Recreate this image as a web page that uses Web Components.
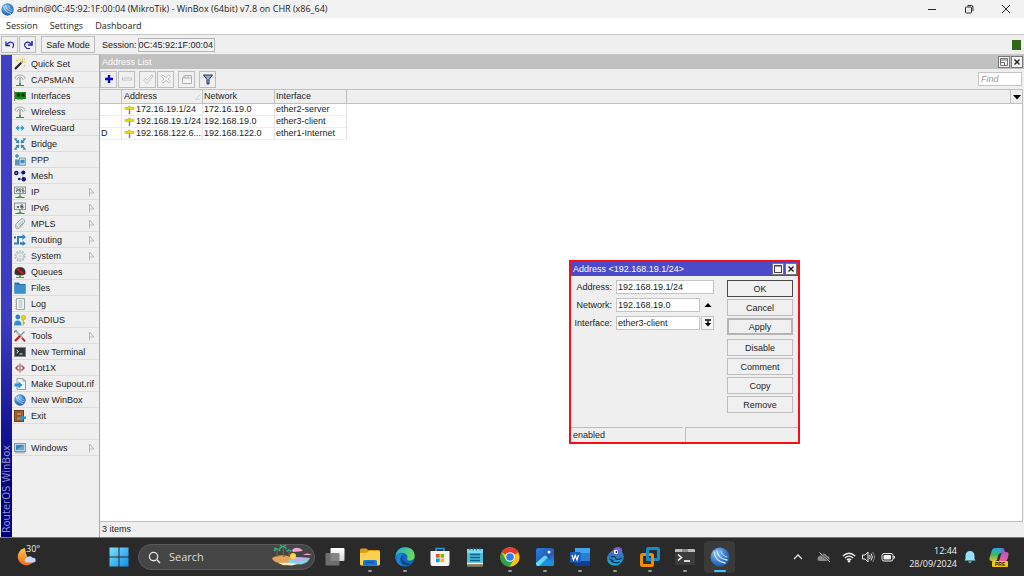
<!DOCTYPE html>
<html lang="en">
<head>
<meta charset="utf-8">
<title>WinBox</title>
<style>
  html, body { margin: 0; height: 100%; }
  body { background: #efefef; overflow: hidden; font: 9px/12px "Liberation Sans", Arial, sans-serif; color: #1c1c1c; }
</style>
</head>
<body>
<desktop-shell></desktop-shell>
<script>
/* ---------- icons: [viewBox size, markup] ---------- */
const T = 'fill="none" stroke="#2a2a2a"';
const stand = '<path d="M6 8v3" stroke="#555"/><path d="M1.500 11.500h9" stroke="#3a7d2a"/><rect x="4.500" y="10" width="3" height="2" fill="#2fb52f"/>';
const antenna = '<g fill="none" stroke="#9ab0a8"><path d="M1 5Q1 1 6 1t5 4"/><path d="M3 6Q3 3 6 3t3 3"/></g><path d="M6 4v6" stroke="#777"/><path d="M2 11.500h8" stroke="#3c8a3c"/><rect x="5" y="9" width="2" height="2" fill="#3bae3b"/>';
const ball = '<defs><radialGradient id="b" cx=".35" cy=".3" r=".8"><stop offset="0" stop-color="#8cc3f2"/><stop offset=".6" stop-color="#3477c9"/><stop offset="1" stop-color="#1f4f9c"/></radialGradient></defs><circle cx="10" cy="10" r="9.500" fill="url(#b)"/><g fill="none" stroke="#d2e6fb" stroke-width="1.300" stroke-linecap="round"><path d="M4 5Q5 14 15 16"/><path d="M7 4Q8 11.500 17 13"/><path d="M11 4Q12 9 17 10" stroke-width=".8"/></g>';
const ICONS = {
  winbox: [20, ball],
  minimize: [12, `<path d="M2 6.500h8" ${T}/>`],
  restore: [12, `<rect x="2.500" y="4" width="6" height="6" rx="1" ${T}/><path d="M4.500 2.500h4q1.500 0 1.500 1.500v4" ${T}/>`],
  close: [12, `<path d="M2 2l8 8M10 2l-8 8" ${T}/>`],
  undo: [12, '<path d="M2 2.500v4h4" fill="none" stroke="#2525b5" stroke-width="1.300"/><path d="M2.500 6Q5 2 8 3.500T8.500 9" fill="none" stroke="#2525b5" stroke-width="1.200"/>'],
  redo: [12, '<path d="M10 2v4H6" fill="none" stroke="#2525b5" stroke-width="1.600"/><path d="M9.500 5.500Q6 1.500 3.500 4T5 9.500h3" fill="none" stroke="#2525b5" stroke-width="1.200"/>'],
  plus: [12, '<path d="M6 2v8M2 6h8" stroke="#0a0ac0" stroke-width="2.400"/>'],
  minus: [12, '<rect x="1.500" y="5" width="9" height="2" fill="#fafafa" stroke="#b5b5b5" stroke-width=".8"/>'],
  check: [12, '<path d="M1.500 7l2-1.500L5 7.500 9.500 2l1.500 1L5 10.500z" fill="#f6f6f6" stroke="#b5b5b5" stroke-width=".8"/>'],
  cross: [12, '<path d="M3 2l3 2.500L9 2l1.500 1.500L8 6l2.500 2.500L9 10 6 7.500 3 10 1.500 8.500 4 6 1.500 3.500z" fill="#f6f6f6" stroke="#b5b5b5" stroke-width=".8"/>'],
  note: [12, '<path d="M1.500 4.500l2-2h7v8h-9zM1.500 5h9M4 3v2M7 3v2" fill="#f4f4f4" stroke="#b0b0b0"/>'],
  filter: [12, '<path d="M1.500 2h9L7 6.500v4.500H5V6.500z" fill="#93a9dc" stroke="#2b2f55"/>'],
  sort: [8, '<path d="M1 7h6M1 7L6.500 1" fill="none" stroke="#c4c4c4"/>'],
  addr: [12, '<path d="M6 2v9" stroke="#777" stroke-width="1.600"/><path d="M6 5v6" stroke="#4ea84e"/><path d="M1 3.500h3.500L6 2l1.500 1.500H11v2.500H1z" fill="#e6d800" stroke="#b9ae10" stroke-width=".5"/>'],
  down: [8, '<path d="M0 2h8L4 6.500z" fill="#000"/>'],
  up: [8, '<path d="M.5 6h7L4 2z" fill="#000"/>'],
  dropbar: [8, '<path d="M1 1h6M4 2v2" stroke="#000" stroke-width="1.400"/><path d="M.8 4h6.400L4 7.500z" fill="#000"/>'],
  tear: [10, '<path d="M3.500 9.500V1l4.500 5H4" fill="#fafafa" stroke="#b4b4b4"/>'],
  wmax: [10, '<path d="M1.500 1.500h7v7h-7z" fill="none" stroke="#444"/><path d="M1 2h8" stroke="#444"/>'],
  wrest: [10, '<path d="M1.500 1.500h7v7h-7zM1.500 3h7M1.500 5.500h4v3" fill="none" stroke="#666" stroke-width=".9"/>'],
  wx: [10, '<path d="M2.500 2.500l5 5M7.500 2.500l-5 5" stroke="#222" stroke-width="1.400"/>'],
  wand: [12, '<path d="M1 11L7.500 4.500" stroke="#222" stroke-width="2.200"/><path d="M7 5l2-2" stroke="#aaa" stroke-width="2"/><path d="M8.500.5v2M11.500 4H10M2 2l2 1M6 .8l.5 1.500M10 7l1 1.500M11 1l-1 1" stroke="#e4cf10" stroke-width="1.200"/>'],
  antenna: [12, antenna],
  nic: [12, '<path d="M.5 1v10" stroke="#888"/><rect x="1" y="2" width="11" height="7" fill="#178a17"/><path d="M3 3.500h3v3H3zM7.500 3.500h3v3h-3z" fill="#0a2c0a"/><path d="M3 9.500h6" stroke="#c9b400"/>'],
  wg: [12, '<path d="M1.500 6l3-3v2h3V3l3 3-3 3V7h-3v2z" fill="#2a9be0"/><path d="M5 6h2" stroke="#eaf6ff"/>'],
  bridge: [12, '<path d="M1 1l4 4M11 1L7 5M1 11l4-4M11 11L7 7" stroke="#2c7fbd" stroke-width="1.500"/><path d="M5 1.500V5H1.500zM7 1.500V5h3.500zM5 10.500V7H1.500zM7 10.500V7h3.500z" fill="#3a80ad"/><path d="M0 0h3v1.500H0zM9 0h3v1.500H9zM0 10.500h3V12H0zM9 10.500h3V12H9z" fill="#7ba3bd"/>'],
  ppp: [12, '<path d="M3 0v4M1 2h4" stroke="#2d8cc9" stroke-width="1.300"/><rect x="1" y="5.500" width="4" height="6" fill="#5f93b5"/><rect x="5.500" y="4" width="6" height="7.500" fill="#b9d0df" stroke="#6d8ea3" stroke-width=".7"/><rect x="6.500" y="6" width="4" height="3" fill="#3c90c8"/>'],
  mesh: [12, '<path d="M2.500 3h6l.5 6" fill="none" stroke="#a4a9cc" stroke-width=".8"/><g fill="#14147e"><circle cx="2.300" cy="3" r="2.200"/><circle cx="9.300" cy="2.600" r="2"/><circle cx="9.700" cy="9.300" r="2.200"/><circle cx="5.300" cy="9" r="1.300"/></g><circle cx="2.300" cy="3" r=".8" fill="#bcc"/>'],
  ip: [12, '<rect x=".5" y="1" width="11" height="6.500" fill="#e3e9e9" stroke="#8a9797"/><path d="M2 3h2v1.500H2.500V6M5 6h1.500V4.500H5V3h2M8 6h2V4.500H8V3h2" fill="none" stroke="#555" stroke-width=".8"/>' + stand],
  ipv6: [12, '<rect x=".5" y="1" width="11" height="6.500" fill="#e3e9e9" stroke="#8a9797"/><path d="M3 4l1 2 1-2M9 3H7v3h2V4.500H7" fill="none" stroke="#444" stroke-width=".9"/>' + stand],
  mpls: [12, '<path d="M2 6L7 1q2-.8 3 .5t.5 3L5 10.500q-1.500.8-3-.5T2 6z" fill="#edf3f1" stroke="#91a8a0"/><path d="M4 7.500l4-4q1.500 0 1 1.500L5 9M1.500 7.500q2 .5 3 3" fill="none" stroke="#9fb4ad"/>'],
  routing: [12, '<path d="M0 9.500h4V3h5" fill="none" stroke="#2a7fc4" stroke-width="2"/><path d="M0 3.500h2M6 9.500h3" fill="none" stroke="#33658a" stroke-width="1.800"/><path d="M8.500 0L12 3 8.500 6zM8.500 6.800L12 9.500 8.500 12z" fill="#2a86cc"/>'],
  gear: [12, '<circle cx="6" cy="6" r="4.800" fill="none" stroke="#b4c0bd" stroke-width="1.800" stroke-dasharray="1.800 1.200"/><circle cx="6" cy="6" r="3.400" fill="#f3f5f5" stroke="#b4c0bd"/><circle cx="6" cy="6" r="1.200" fill="#fff" stroke="#aab8b4" stroke-width=".7"/>'],
  queues: [12, '<path d="M.5 8Q0 1 6 1t5.500 7q-2 1.500-5.500 1.500T.5 8z" fill="#3a3232"/><path d="M3 2.500L9.500 8" stroke="#c8201c" stroke-width="2"/><path d="M2 11.500h8" stroke="#39a339"/><rect x="5" y="9.500" width="2" height="2" fill="#3bbb3b"/>'],
  files: [12, '<path d="M.5.500H5l1 1.500h5.500v9.500H.5z" fill="#2a72ad"/><path d="M.5 3h11v8.500H.5z" fill="#3c8fcd"/>'],
  log: [12, '<path d="M2.500.5h8v11h-8z" fill="#f3f6f5" stroke="#97a7a2"/><path d="M4.500 3h4M4.500 5h4M4.500 7h4M4.500 9h4" stroke="#a9b6b2"/><path d="M1.500 2v9" stroke="#b9c5c1" stroke-dasharray="1 1"/>'],
  radius: [12, '<circle cx="3.800" cy="3" r="2.400" fill="#2b84c8"/><path d="M0 11.500q0-5 3.800-5t3.700 5z" fill="#2f8fd6"/><circle cx="9.300" cy="3.500" r="2.300" fill="#e3d21c" stroke="#a99a12" stroke-width=".5"/><path d="M9.300 5.500v6M9.300 9h1.700" stroke="#c9b814" stroke-width="1.300"/>'],
  tools: [12, '<path d="M2 1l9 10" stroke="#aeb4b6" stroke-width="2"/><path d="M10.500 1.500L6 6" stroke="#8a9194" stroke-width="1.300"/><path d="M6 6l-5 5" stroke="#c3202a" stroke-width="2.400"/><path d="M0 2.500L2.500 0" stroke="#888" stroke-width="1.500"/><path d="M8 8l3 3.500" stroke="#b3222a" stroke-width="1.600"/>'],
  term: [12, '<rect x=".5" y="1.500" width="11" height="9" fill="#2e3336" stroke="#81888b"/><path d="M2.500 4l2 1.500-2 1.500M5.500 8h3" fill="none" stroke="#e8e8e8"/>'],
  dot1x: [12, '<path d="M4.500 3.500L2 6l2.500 2.500M7.500 3.500L10 6 7.500 8.500" fill="none" stroke="#c23a44" stroke-width="1.400"/><path d="M6 1.500v9" stroke="#555"/>'],
  supout: [12, '<path d="M3 .5h6l2.500 2.500v8.500H3z" fill="#eef2f3" stroke="#8fa0a6"/><path d="M9 .5V3h2.500" fill="none" stroke="#8fa0a6"/><path d="M.5 5.500h4v-2L8.500 7l-4 3.500v-2h-4z" fill="#2b93d4"/>'],
  exit: [12, '<rect x=".5" y=".5" width="9" height="11" fill="#a9622c" stroke="#6e3c18"/><path d="M2.500 2.500h5v3h-5zM2.500 7h5v3h-5z" fill="#c88850" stroke="#7a4520" stroke-width=".6"/><path d="M12 6.500v2.500H9v2L5 7.800 9 4.500v2z" fill="#2a93d8"/>'],
  screen: [12, '<rect x=".5" y="1.500" width="11" height="8" fill="#bcd3e0" stroke="#8296a2"/><rect x="2" y="3" width="8" height="5" fill="#2f86c4"/><path d="M2 8l8-5v5z" fill="#5aa9dd"/><path d="M1 10.800h10" stroke="#8aa0ab"/>'],
  weather: [20, '<defs><linearGradient id="m" x2="0" y2="1"><stop stop-color="#ffc64a"/><stop offset="1" stop-color="#ee6a1c"/></linearGradient></defs><path d="M8 1A8.700 8.700 0 1 0 17.500 13Q9 14 8 1z" fill="url(#m)"/><path d="M9 15.500a2.500 2.500 0 0 1 .8-4.700 3.500 3.500 0 0 1 6 .2 2.300 2.300 0 0 1 1.200 4.500z" fill="#c4d8fb"/>'],
  start: [20, '<defs><linearGradient id="s" x2="1" y2="1"><stop stop-color="#7fe1ff"/><stop offset="1" stop-color="#0b8de8"/></linearGradient></defs><path d="M.5.5h9v9h-9zM10.500.5h9v9h-9zM.5 10.500h9v9h-9zM10.500 10.500h9v9h-9z" fill="url(#s)"/>'],
  search: [14, '<circle cx="6" cy="6" r="4.500" fill="none" stroke="#e6e6e6" stroke-width="1.400"/><path d="M9.500 9.500l3.500 3.500" stroke="#e6e6e6" stroke-width="1.500"/>'],
  task: [20, '<defs><linearGradient id="t" x2="0" y2="1"><stop stop-color="#fff"/><stop offset="1" stop-color="#d6d6d6"/></linearGradient></defs><rect x="5.500" y="1" width="14" height="13" rx="1" fill="url(#t)"/><rect x=".5" y="6" width="14" height="12.500" rx="1" fill="#777" opacity=".88"/>'],
  explorer: [20, '<path d="M0 3q0-1.500 1.500-1.500h5L8 3h10.500Q20 3 20 4.500V10H0z" fill="#e09a16"/><path d="M0 6l7-.2L9 4h9.500Q20 4 20 5.500V17q0 1.500-1.500 1.500h-17Q0 18.500 0 17z" fill="#ffd04d"/><path d="M3 18.500V15q0-2 2-2h10q2 0 2 2v3.500z" fill="#1577d2"/><path d="M6.500 15.500h7" stroke="#0b4f9e" stroke-width="1.200"/>'],
  edge: [20, '<defs><linearGradient id="e" x2="1" y2=".4"><stop stop-color="#21a7e8"/><stop offset="1" stop-color="#66dd55"/></linearGradient></defs><circle cx="10" cy="10" r="9.700" fill="#0f66bd"/><path d="M.3 9Q2 .3 10 .3q9 0 9.700 8.200.3 4.500-4.500 5-3.500 0-3-2 .8-2-.2-3.500Q6 2.800.3 9z" fill="url(#e)"/><path d="M8 7.500q-4 3-1.500 7.500 3.500 5 10.500 1.500-5 1-8-2t-1-7z" fill="#0a3c7a"/><path d="M.3 10Q2 4.500 8.500 7 3 11 6 16.500L8 19.500Q1 17.500.3 10z" fill="#1b82d4"/>'],
  store: [20, '<path d="M6 5V1.500h8V5" fill="none" stroke="#1e9fe0" stroke-width="1.500"/><path d="M.5 4h19v13q0 2-2 2h-15q-2 0-2-2z" fill="#f5f5f5"/><path d="M6 7h3.700v3.700H6z" fill="#f25022"/><path d="M10.500 7h3.700v3.700h-3.700z" fill="#7fba00"/><path d="M6 11.500h3.700v3.700H6z" fill="#00a4ef"/><path d="M10.500 11.500h3.700v3.700h-3.700z" fill="#ffb900"/>'],
  notepad: [20, '<rect x="2" y="2" width="16" height="17.500" rx="1" fill="#4fbcdb"/><rect x="2" y="2" width="16" height="4" fill="#7fdcf2"/><path d="M5 7.500h10M5 10.500h10M5 13.500h10" stroke="#0b6488" stroke-width="1.300"/><path d="M2 16.500h16" stroke="#e9f6f9" stroke-width="1.500"/><path d="M2 18.300h16" stroke="#c36a22" stroke-width="2"/><path d="M5 .5v3M8.300.5v3M11.600.5v3M15 .5v3" stroke="#1d6d87"/>'],
  chrome: [20, '<circle cx="10" cy="10" r="9.700" fill="#fbc116"/><path d="M10 10L1.600 5.150A9.700 9.700 0 0 1 18.400 5.150z" fill="#e33b2e"/><path d="M1.600 5.150A9.700 9.700 0 0 0 9.500 19.700L14 12.500 10 10 5.800 12.400z" fill="#2da04c"/><circle cx="10" cy="10" r="4.800" fill="#fff"/><circle cx="10" cy="10" r="3.800" fill="#2f7de9"/>'],
  photos: [20, '<defs><linearGradient id="p" x2="1" y2="1"><stop stop-color="#1f83dc"/><stop offset=".6" stop-color="#3155b5"/><stop offset="1" stop-color="#20a5e8"/></linearGradient></defs><rect x="1" y="1" width="18" height="18" rx="2" fill="url(#p)"/><path d="M1 16l8-7q1-1 2 0l8 8q0 2-2 2H3q-2 0-2-3z" fill="#1b8fe0"/><path d="M1 16L9 9q1-1 2 0l1.500 1.500L4 19H3q-2 0-2-3z" fill="#64dcf8"/><circle cx="14" cy="5" r="1.500" fill="#fff"/>'],
  word: [20, '<rect x="5" y="1" width="15" height="18" rx="1" fill="#2b7cd3"/><path d="M5 1h15v5H5z" fill="#41a5ee"/><path d="M5 14h15v5H5z" fill="#103f91"/><rect x="0" y="5" width="10.500" height="10.500" rx="1" fill="#185abd"/><path d="M2 8l1.500 5L5.200 8.500 7 13l1.500-5" fill="none" stroke="#fff" stroke-width="1.200"/>'],
  gns: [20, '<defs><linearGradient id="g" x2="0" y2="1"><stop stop-color="#8a5ae0"/><stop offset=".5" stop-color="#2a7bbd"/><stop offset="1" stop-color="#19b5d8"/></linearGradient></defs><path d="M8 3q1-3 6-3 4 1 3 5 3 4 1 8-3 6-9 5.500Q2 18 2 11 3 6 8 3z" fill="url(#g)"/><path d="M6 10q4-2 5 2 3 1 6-1M6 14q4 3 9 1M4.500 12l4 2" fill="none" stroke="#0c2b52" stroke-width="1.200"/><circle cx="11" cy="5" r="2.200" fill="#fff"/><circle cx="11.500" cy="5" r=".9" fill="#222"/>'],
  vmware: [20, '<rect x="7.500" y="1.500" width="11" height="11" rx="1" fill="none" stroke="#0f8fc9" stroke-width="3"/><rect x="1.500" y="7.500" width="11" height="11" rx="1" fill="none" stroke="#f38b00" stroke-width="3"/><path d="M7.500 6v6.500h4" fill="none" stroke="#0f8fc9" stroke-width="3"/>'],
  terminal: [20, '<rect x="0" y="2" width="20" height="16" rx="1" fill="#3c3c3c"/><path d="M0 5V3q0-1 1-1h18q1 0 1 1v2z" fill="#bdbdbd"/><path d="M7 2h6v3H7z" fill="#8a8a8a"/><path d="M3 7.500l3.500 3L3 13.500" fill="none" stroke="#fff" stroke-width="1.600"/><path d="M9 14h6" stroke="#fff" stroke-width="1.600"/>'],
  chev: [12, '<path d="M2 8l4-4 4 4" fill="none" stroke="#e8e8e8" stroke-width="1.300"/>'],
  cloud: [14, '<path d="M3 11a2.500 2.500 0 0 1 0-5 3.700 3.700 0 0 1 7 0 2.600 2.600 0 0 1 1 5z" fill="#8c8c8c"/><path d="M2 2l11 10" stroke="#2b2b2b" stroke-width="2"/><path d="M2.500 2.500L13 12" stroke="#c8c8c8"/>'],
  wifi: [14, '<g fill="none" stroke="#eee" stroke-width="1.200"><path d="M.8 6q6-5.500 12.400 0"/><path d="M2.800 8q4.200-3.800 8.400 0"/><path d="M4.800 10q2.200-2 4.400 0"/></g><circle cx="7" cy="11.300" r="1.200" fill="#eee"/>'],
  sound: [14, '<path d="M1.500 5h2.500l3-3v10l-3-3H1.500z" fill="none" stroke="#eee"/><path d="M8.500 5q1.500 2 0 4M10 3.500q2.800 3.500 0 7" fill="none" stroke="#eee"/><path d="M11.500 2q4 5 0 10" fill="none" stroke="#888"/>'],
  battery: [14, '<rect x="1" y="3.500" width="11" height="7.500" rx="2" fill="none" stroke="#eee"/><rect x="2.500" y="5" width="7.500" height="4.500" rx="1" fill="#eee"/><path d="M13.200 6v2.500" stroke="#eee" stroke-width="1.400"/>'],
  bell: [14, '<path d="M1.500 10.500l1-1.500V5.500a4.500 4.500 0 0 1 9 0V9l1 1.500z" fill="#93e2fb"/><path d="M5 11.500h4q-2 2.500-4 0z" fill="#93e2fb"/>'],
  copilot: [20, '<defs><linearGradient id="c1" x2="0" y2="1"><stop stop-color="#2aa4ea"/><stop offset=".5" stop-color="#35b86a"/><stop offset="1" stop-color="#f2c01c"/></linearGradient><linearGradient id="c2" x2="0" y2="1"><stop stop-color="#8c52e0"/><stop offset="1" stop-color="#f0608a"/></linearGradient></defs><path d="M6 1h7q2 0 1.500 2L12 6q-2 0-3 3l-1 4q-.5 1-2 1H3q-3 0-2.500-3L3 3q1-2 3-2z" fill="url(#c1)"/><path d="M12 1q3-.5 3.500 2l.5 2h1.500q2.500 0 2 3l-1 4q-.5 2-2.500 2H10L12.500 6z" fill="url(#c2)"/>'],
  beach: [40, '<path d="M1 22q8-4 20-2l17 1q-2 5-9 6.500L13 26z" fill="#7fd4e8"/><path d="M0 21q6-4 16-2 5 1 4 3-5 1-3 4-2 3-6 2l-4-2Q1 25 0 21z" fill="#e0a45a"/><path d="M6 26q12-1 20 1l-6 1.500-9-.5z" fill="#f6efc8"/><path d="M22 20l16 1-7 3-9 1z" fill="#b9b1f0"/><circle cx="21" cy="19" r="3" fill="#ffd34d"/><path d="M20 13q3-3 6-2 3 0 5 3l-10 1zM31 18q4-3 9 0z" fill="#f0a8d2"/><path d="M5 20V13M12 20l-1-9M17 20v-6" stroke="#8a5a34" stroke-width="1.200"/><path d="M2 14q3-4 6 0M7.500 12q3.500-5 7 0M14.500 14.500q2.500-3 5 0M5 12l-3-1M11 10l3-2M11 10L8 8" fill="none" stroke="#2fae7c" stroke-width="1.500"/>']
};

const define = (name, css, html, setup) => {
  const tpl = document.createElement('template');
  tpl.innerHTML = `<style>*{box-sizing:border-box}button,input{font:inherit;color:inherit;margin:0}button{cursor:default}${css}</style>${html}`;
  customElements.define(name, class extends HTMLElement {
    constructor() {
      super();
      this.attachShadow({ mode: 'open' }).append(tpl.content.cloneNode(true));
    }
    connectedCallback() { if (setup) setup(this, this.shadowRoot); }
  });
};

define('ui-icon', ':host{display:inline-flex;flex:none;width:var(--size,12px);height:var(--size,12px)}div{width:100%;height:100%}svg{display:block;width:100%;height:100%}', '<div></div>', (el, root) => {
  const icon = ICONS[el.getAttribute('name')];
  if (!icon) return;
  const size = el.getAttribute('size');
  if (size) el.style.setProperty('--size', size + 'px');
  root.querySelector('div').innerHTML = `<svg viewBox="0 0 ${icon[0]} ${icon[0]}" aria-hidden="true">${icon[1]}</svg>`;
});

/* Flat button with a grey outline; icon or text comes through the slot */
define('ui-button', `
  :host{display:flex;height:17px;min-width:17px}
  button{flex:1;display:flex;align-items:center;justify-content:center;padding:0;border:1px solid #bdbdbd;background:#f0f0f0;border-radius:0}
  :host([kind=default]) button{border-color:#4a4a4a}
  :host([kind=focus]) button{border:2px solid #b4b4b4}
  :host([kind=frame]){height:12px;min-width:12px}
  :host([kind=frame]) button{border-color:#777;background:#f4f4f4}
`, '<button type="button"><slot></slot></button>', (el, root) => {
  const l = el.getAttribute('label');
  if (l) root.querySelector('button').setAttribute('aria-label', l);
});

define('app-titlebar', `
  :host{display:flex;align-items:center;height:18px;background:#f2f2f2;padding-left:1px;font:9px/14px "Open Sans","Noto Sans",sans-serif}
  .t{flex:1;padding-left:3px}
  button{width:37px;height:18px;border:0;background:none;display:flex;align-items:center;justify-content:center;padding:0}
`, `<ui-icon name="winbox" size="13"></ui-icon><span class="t"><slot></slot></span>
  <button aria-label="Minimize"><ui-icon name="minimize"></ui-icon></button>
  <button aria-label="Restore"><ui-icon name="restore"></ui-icon></button>
  <button aria-label="Close"><ui-icon name="close"></ui-icon></button>`);

define('app-menubar', `
  :host{display:flex;gap:12px;height:16px;background:#fff;padding-left:6px;font:9px/16px "Open Sans","Noto Sans",sans-serif}
  button{border:0;background:none;padding:0}
`, '<button>Session</button><button>Settings</button><button>Dashboard</button>');

define('app-toolbar', `
  :host{display:flex;align-items:center;height:21px;background:#efefef;border:solid #c6c6c6;border-width:1px 0;padding:0 3px 0 1px;gap:1px}
  .safe{width:54px;margin-left:4px}
  label{padding-left:6px}
  input{width:77px;height:14px;border:1px solid #b5b5b5;background:#f2f2f2;padding:0}
  .led{margin-left:auto;width:9px;height:10px;background:#316618}
`, `<ui-button label="Undo"><ui-icon name="undo"></ui-icon></ui-button>
  <ui-button label="Redo"><ui-icon name="redo"></ui-icon></ui-button>
  <ui-button class="safe">Safe Mode</ui-button>
  <label for="s">Session:</label><input id="s" readonly value="0C:45:92:1F:00:04">
  <span class="led"></span>`);

define('side-item', `
  :host{display:block}
  button{display:flex;align-items:center;width:100%;height:16px;border:0;border-bottom:1px solid #dcdcdc;background:none;padding:0 3px 0 2px;text-align:left}
  span{flex:1;padding-left:5px;white-space:nowrap}
`, '<button type="button"><span><slot></slot></span></button>', (el, root) => {
  const b = root.querySelector('button');
  b.insertAdjacentHTML('afterbegin', `<ui-icon name="${el.getAttribute('icon')}"></ui-icon>`);
  if (el.hasAttribute('sub')) b.insertAdjacentHTML('beforeend', '<ui-icon name="tear" size="10"></ui-icon>');
});

define('side-menu', `
  :host{display:flex;width:100px;border-right:1px solid #a8a8a8;background:#efefef}
  .strip{width:11px;margin-left:1px;flex:none;display:flex;align-items:center;justify-content:flex-start;writing-mode:vertical-rl;transform:rotate(180deg);background:linear-gradient(to top,#4040c8 0,#3c3cc0 55%,#00007c 90%);color:#9090c8;font:10px/11px "DejaVu Sans",sans-serif;padding-top:4px}
  nav{flex:1;min-width:0;padding-top:1px}
  .gap{height:16px;border-bottom:1px solid #dcdcdc}
`, `<div class="strip">RouterOS WinBox</div><nav></nav>`, (el, root) => {
  const items = [['wand','Quick Set'],['antenna','CAPsMAN'],['nic','Interfaces'],['antenna','Wireless'],['wg','WireGuard'],['bridge','Bridge'],['ppp','PPP'],['mesh','Mesh'],['ip','IP',1],['ipv6','IPv6',1],['mpls','MPLS',1],['routing','Routing',1],['gear','System',1],['queues','Queues'],['files','Files'],['log','Log'],['radius','RADIUS'],['tools','Tools',1],['term','New Terminal'],['dot1x','Dot1X'],['supout','Make Supout.rif'],['winbox','New WinBox'],['exit','Exit'],null,['screen','Windows',1]];
  root.querySelector('nav').innerHTML = items.map(i => i ? `<side-item icon="${i[0]}"${i[2] ? ' sub' : ''}>${i[1]}</side-item>` : '<div class="gap"></div>').join('');
});

define('address-list', `
  :host{display:flex;flex-direction:column;flex:1;min-width:0;background:#efefef}
  header{display:flex;align-items:center;gap:1px;height:14px;background:#c0c0c0;color:#fff;padding:0 1px 0 2px}
  header span{flex:1}
  .tools{display:flex;align-items:center;height:20px;padding:0 2px 0 0;gap:1px}
  .g{margin-left:3px}
  input{margin-left:auto;width:44px;height:14px;border:1px solid #c4c4c4;background:#fff;padding:0 2px;font-style:italic}
  input::placeholder{color:#999;opacity:1}
  .list{flex:1;background:#fff;border:solid #c0c0c0;border-width:1px 1px 1px 0;margin-right:1px;position:relative}
  .head{height:14px;background:#efefef;border-bottom:1px solid #c0c0c0;display:flex;justify-content:flex-end}
  .head button{width:12px;border:0;border-left:1px solid #c0c0c0;background:none;padding:0;display:flex;align-items:center;justify-content:center}
  table{border-collapse:separate;border-spacing:0;table-layout:fixed;width:247px;margin-top:-14px}
  th,td{padding:0 0 0 2px;height:12px;line-height:11px;font-weight:400;text-align:left;white-space:nowrap;border-right:1px solid #e4e4e4;border-bottom:1px solid #ececec}
  th{height:14px;line-height:13px;border-color:#c0c0c0}
  th,td{padding-left:1px}
  .c{display:flex;align-items:center;gap:1px;padding-left:1px}
  th .c{justify-content:space-between;padding-right:1px}
  footer{height:15px;line-height:15px;padding-left:2px}
`, `<header><span>Address List</span>
    <ui-button kind="frame" label="Restore"><ui-icon name="wrest" size="10"></ui-icon></ui-button>
    <ui-button kind="frame" label="Close"><ui-icon name="wx" size="10"></ui-icon></ui-button></header>
  <div class="tools">
    <ui-button label="Add"><ui-icon name="plus"></ui-icon></ui-button>
    <ui-button label="Remove"><ui-icon name="minus"></ui-icon></ui-button>
    <ui-button class="g" label="Enable"><ui-icon name="check"></ui-icon></ui-button>
    <ui-button label="Disable"><ui-icon name="cross"></ui-icon></ui-button>
    <ui-button class="g" label="Comment"><ui-icon name="note"></ui-icon></ui-button>
    <ui-button class="g" label="Filter"><ui-icon name="filter"></ui-icon></ui-button>
    <input placeholder="Find" aria-label="Find">
  </div>
  <div class="list">
    <div class="head"><button aria-label="Columns"><ui-icon name="down" size="8"></ui-icon></button></div>
    <table><colgroup><col style="width:22px"><col style="width:81px"><col style="width:72px"><col style="width:72px"></colgroup>
      <thead><tr><th></th><th><div class="c">Address<ui-icon name="sort" size="6"></ui-icon></div></th><th>Network</th><th>Interface</th></tr></thead>
      <tbody>
        <tr><td></td><td><div class="c"><ui-icon name="addr" size="11"></ui-icon>172.16.19.1/24</div></td><td>172.16.19.0</td><td>ether2-server</td></tr>
        <tr><td></td><td><div class="c"><ui-icon name="addr" size="11"></ui-icon>192.168.19.1/24</div></td><td>192.168.19.0</td><td>ether3-client</td></tr>
        <tr><td>D</td><td><div class="c"><ui-icon name="addr" size="11"></ui-icon>192.168.122.6...</div></td><td>192.168.122.0</td><td>ether1-Internet</td></tr>
      </tbody></table>
  </div>
  <footer>3 items</footer>`);

define('address-dialog', `
  :host{display:flex;flex-direction:column;width:231px;background:#efefef;border:2px solid #fb0d14}
  header{display:flex;align-items:center;gap:1px;height:14px;background:#4a4acb;color:#fff;padding:0 1px 0 2px}
  header span{flex:1}
  .body{display:flex;justify-content:space-between;padding:4px 5px 14px 1px}
  form{display:grid;grid-template-columns:43px 84px 13px;column-gap:1px;row-gap:4px;align-content:start}
  label{text-align:right;line-height:14px;padding-right:3px}
  input{width:100%;height:14px;border:1px solid #c4c4c4;background:#fff;padding:0 1px}
  .wide{grid-column:2/4}
  .arrow{height:14px;border:0;background:none;padding:0;display:flex;align-items:center;justify-content:center}
  .box{border:1px solid #c4c4c4;background:#f4f4f4}
  .acts{width:66px;display:flex;flex-direction:column;gap:2px}
  .acts .n{margin-top:2px}
  footer{display:flex;gap:2px;height:15px;line-height:14px}
  footer div{flex:1;border-top:1px solid #bdbdbd;padding-left:2px}
  footer div+div{border-left:1px solid #bdbdbd}
`, `<header><span>Address &lt;192.168.19.1/24&gt;</span>
    <ui-button kind="frame" label="Maximize"><ui-icon name="wmax" size="10"></ui-icon></ui-button>
    <ui-button kind="frame" label="Close"><ui-icon name="wx" size="10"></ui-icon></ui-button></header>
  <div class="body">
    <form>
      <label for="a">Address:</label><input id="a" class="wide" value="192.168.19.1/24">
      <label for="n">Network:</label><input id="n" value="192.168.19.0"><button type="button" class="arrow" aria-label="Collapse"><ui-icon name="up" size="8"></ui-icon></button>
      <label for="i">Interface:</label><input id="i" value="ether3-client"><button type="button" class="arrow box" aria-label="Choose interface"><ui-icon name="dropbar" size="8"></ui-icon></button>
    </form>
    <div class="acts">
      <ui-button kind="default">OK</ui-button><ui-button>Cancel</ui-button><ui-button kind="focus">Apply</ui-button>
      <ui-button class="n">Disable</ui-button><ui-button>Comment</ui-button><ui-button>Copy</ui-button><ui-button>Remove</ui-button>
    </div>
  </div>
  <footer><div>enabled</div><div></div></footer>`);

define('task-app', `
  :host{display:flex;width:35px;height:32px}
  button{flex:1;margin:0 2px;border:0;border-radius:4px;background:none;padding:6px 0 1px;display:flex;flex-direction:column;align-items:center;justify-content:space-between}
  i{height:2px;width:4px;border-radius:1px}
  :host([run]) i{background:#9a9a9a}
  :host([active]) button{background:#3a3a3a}
  :host([active]) i{width:12px;background:#4cc2ff}
`, '<button type="button"><i></i></button>', (el, root) => {
  const n = el.getAttribute('icon'), b = root.querySelector('button');
  b.setAttribute('aria-label', n);
  b.insertAdjacentHTML('afterbegin', `<ui-icon name="${n}" size="20"></ui-icon>`);
});

define('task-bar', `
  :host{display:flex;align-items:center;height:39px;background:#2a2a2a;border-top:1px solid #777;color:#f0f0f0;font-family:"Open Sans","Noto Sans",sans-serif}
  .weather{width:101px;padding-left:17px;display:flex;align-items:center;position:relative}
  .weather b{position:absolute;left:26px;top:-4px;font-weight:400;font-size:9px}
  .search{display:flex;align-items:center;width:177px;height:26px;border-radius:13px;border:1px solid #5a5a5a;background:#454545;padding:0 2px 0 9px;gap:8px;margin:0 2px}
  .search input{flex:1;min-width:0;border:0;background:none;padding:0;font-size:11px;line-height:16px}
  .search input::placeholder{color:#dcdcdc;opacity:1}
  .tray{margin-left:auto;display:flex;align-items:center;padding-right:15px}
  .clock{text-align:right;font-size:9px;line-height:13px;margin:0 6px 0 14px}
  .pre{position:relative;display:flex;margin-left:12px}
  .pre span{position:absolute;left:3px;bottom:0;background:#f5c518;color:#222;font:bold 5px/6px "Liberation Sans",sans-serif;padding:0 3px;border-radius:1px}
`, `<div class="weather"><ui-icon name="weather" size="20"></ui-icon><b>30°</b></div>
  <task-app icon="start"></task-app>
  <div class="search"><ui-icon name="search" size="13"></ui-icon><input placeholder="Search" aria-label="Search"><ui-icon name="beach" size="40"></ui-icon></div>
  <task-app icon="task"></task-app><task-app icon="explorer" run></task-app><task-app icon="edge" run></task-app><task-app icon="store"></task-app><task-app icon="notepad"></task-app><task-app icon="chrome" run></task-app><task-app icon="photos" run></task-app><task-app icon="word" run></task-app><task-app icon="gns" run></task-app><task-app icon="vmware" run></task-app><task-app icon="terminal" run></task-app><task-app icon="winbox" active></task-app>
  <div class="tray">
    <ui-icon name="chev" size="12" style="margin-right:13px"></ui-icon>
    <ui-icon name="cloud" size="14" style="margin-right:11px"></ui-icon>
    <ui-icon name="wifi" size="14" style="margin-right:5px"></ui-icon>
    <ui-icon name="sound" size="14" style="margin-right:6px"></ui-icon>
    <ui-icon name="battery" size="14"></ui-icon>
    <div class="clock">12:44<br>28/09/2024</div>
    <ui-icon name="bell" size="14"></ui-icon>
    <div class="pre"><ui-icon name="copilot" size="20"></ui-icon><span>PRE</span></div>
  </div>`);

define('desktop-shell', `
  :host{display:flex;flex-direction:column;height:100vh}
  main{flex:1;min-height:0;display:flex;position:relative}
  address-dialog{position:absolute;left:569px;top:205px}
`, `<app-titlebar>admin@0C:45:92:1F:00:04 (MikroTik) - WinBox (64bit) v7.8 on CHR (x86_64)</app-titlebar>
  <app-menubar></app-menubar>
  <app-toolbar></app-toolbar>
  <main><side-menu></side-menu><address-list></address-list><address-dialog></address-dialog></main>
  <task-bar></task-bar>`);
</script>
</body>
</html>
